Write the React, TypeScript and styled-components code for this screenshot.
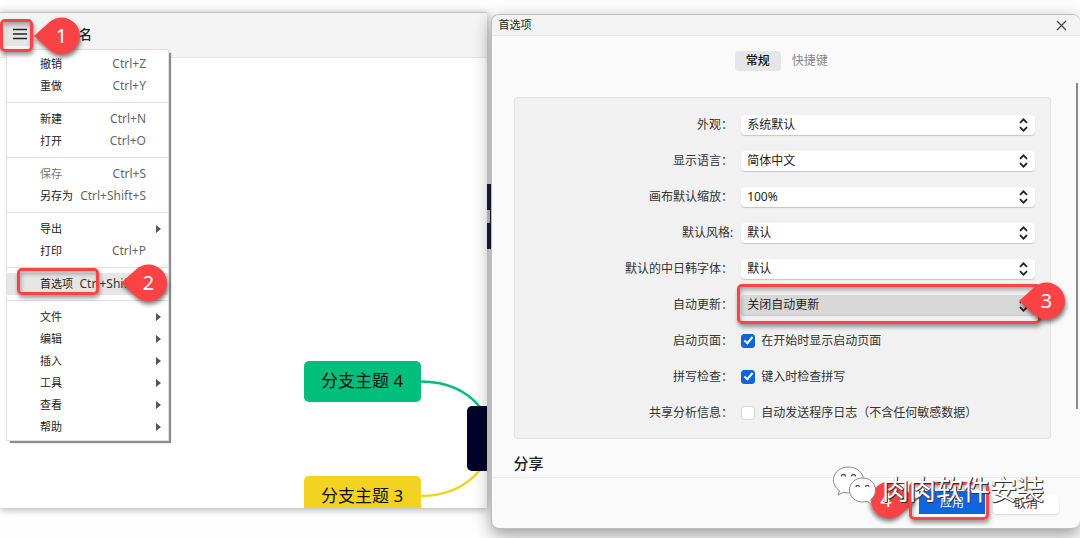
import React, { useState } from "react";
import styled, { createGlobalStyle, css } from "styled-components";

const RED = "#fb4346";

const GlobalStyle = createGlobalStyle`
  *, *::before, *::after { box-sizing: border-box; }
  body {
    margin: 0;
    background: #fefefe;
    color: #222;
    font-family: "Noto Sans", "Noto Sans CJK SC", sans-serif;
    font-size: 12px;
    line-height: 20px;
    overflow: hidden;
  }
  button, select, input { font: inherit; color: inherit; margin: 0; }
`;

const Desktop = styled.div`
  display: flex;
  align-items: flex-start;
  gap: 4px;
  min-height: 100vh;
  padding-top: 12px;
  overflow: hidden;
`;

/* ---------- Mind map window ---------- */

const MapWindow = styled.main`
  position: relative;
  flex: 487 1 0;
  min-width: 0;
  border-top: 1px solid #c4c4c4;
  box-shadow: 0 1px 8px rgba(0, 0, 0, 0.35);
`;

const MapHeader = styled.header`
  display: flex;
  align-items: center;
  gap: 45px;
  height: 45px;
  padding: 0 6px 2px;
  background: #f4f4f4;
  border-bottom: 1px solid #e6e6e6;
`;

const MenuButton = styled.button`
  display: grid;
  place-items: center end;
  width: 28px;
  height: 24px;
  padding: 0;
  border: 0;
  border-radius: 3px;
  background: #e6e6e6;
`;

const MapTitle = styled.h1`
  margin: 0;
  font-size: 13px;
  font-weight: 500;
`;

const Canvas = styled.section`
  position: relative;
  height: 450px;
  background: #fff;
  overflow: hidden;
`;

const Links = styled.svg`
  position: absolute;
  right: 0;
  bottom: 0;
`;

const Topic = styled.div<{ $color: string; $top: number }>`
  position: absolute;
  top: ${(p) => p.$top}px;
  right: 66px;
  width: 117px;
  height: 41px;
  border-radius: 5px;
  background: ${(p) => p.$color};
  color: #111;
  font-size: 17px;
  line-height: 40px;
  text-align: center;
`;

const CentralTopic = styled.div`
  position: absolute;
  top: 348px;
  right: 0;
  width: 20px;
  height: 65px;
  border-radius: 5px 0 0 5px;
  background: #000229;
`;

const EdgeTopic = styled.div`
  position: absolute;
  top: 171px;
  right: -4px;
  display: flex;
  align-items: center;
  width: 4px;
  height: 65px;
  background: #1c1b38;

  &::before {
    content: "";
    width: 3px;
    height: 13px;
    background: #c9c9d2;
  }
`;

const Menu = styled.nav`
  position: absolute;
  top: 36px;
  left: 6px;
  width: 163px;
  padding: 3px 0 2px;
  background: #fff;
  border: 1px solid #dfe1e6;
  box-shadow: 3px 3px 1px -1px #8d8d8d;
  font-size: 11px;
`;

const MenuGroup = styled.ul`
  margin: 0;
  padding: 0;
  list-style: none;

  & + & {
    margin-top: 5px;
    padding-top: 5px;
    border-top: 1px solid #dcdfe5;
  }
`;

const MenuItem = styled.button<{ $active?: boolean }>`
  display: flex;
  align-items: center;
  justify-content: space-between;
  width: 100%;
  height: 22px;
  padding: 0 22px 0 33px;
  border: 0;
  background: ${(p) => (p.$active ? "#e6e6e6" : "transparent")};
  color: #222;
  white-space: nowrap;

  &:disabled { color: #777; }
`;

const Shortcut = styled.span<{ $dark?: boolean }>`
  color: ${(p) => (p.$dark ? "#333" : "#666")};
  font-size: 12px;
`;

const SubmenuArrow = styled.span`
  margin-right: -15px;
  border: 4px solid transparent;
  border-left: 5px solid #555;
  border-right: 0;
`;

/* ---------- Preferences dialog ---------- */

const Dialog = styled.section`
  position: relative;
  flex: 589 1 0;
  min-width: 0;
  margin-top: 2px;
  border: 1px solid #bdbdbd;
  border-right: 0;
  border-radius: 8px;
  background: #fafafa;
  box-shadow: 0 6px 18px rgba(0, 0, 0, 0.4);
`;

const TitleBar = styled.header`
  display: flex;
  align-items: center;
  justify-content: space-between;
  height: 21px;
  padding: 0 13px 0 7px;
  border-bottom: 1px solid #e6e6e6;
  border-radius: 7px 7px 0 0;
  background: #f3f3f3;
  font-size: 11px;
`;

const CloseButton = styled.button`
  display: grid;
  place-items: center;
  padding: 0;
  border: 0;
  background: none;
`;

const Tabs = styled.div`
  display: flex;
  justify-content: center;
  padding: 15px 0 26px 2px;
`;

const Tab = styled.button<{ $selected: boolean }>`
  height: 20px;
  padding: 0 11px;
  border: 0;
  border-radius: 4px;
  line-height: 20px;
  background: ${(p) => (p.$selected ? "#e6e6e6" : "transparent")};
  color: ${(p) => (p.$selected ? "#111" : "#888")};
  font-weight: ${(p) => (p.$selected ? 500 : 400)};
`;

const Settings = styled.form`
  margin: 0 29px 0 22px;
  padding: 9px 15px 7px 0;
  border: 1px solid #e4e4e4;
  border-radius: 3px;
  background: #f1f1f1;
`;

const Field = styled.div`
  display: grid;
  grid-template-columns: 42% 1fr;
  align-items: center;
  gap: 8px;
  height: 36px;
`;

const fieldText = css`
  color: #333;
  white-space: nowrap;
`;

const FieldLabel = styled.label`
  ${fieldText}
  text-align: right;
`;

const SelectBox = styled.div`
  position: relative;
  display: flex;
  align-items: center;
`;

const Select = styled.select<{ $pressed?: boolean }>`
  width: 100%;
  height: 20px;
  padding: 0 24px 0 6px;
  border: 0;
  border-radius: 4px;
  appearance: none;
  background: ${(p) => (p.$pressed ? "#d8d8d8" : "#fff")};
  box-shadow: 0 1px 1px rgba(0, 0, 0, 0.18);
  line-height: 20px;
`;

const SelectArrows = styled.svg`
  position: absolute;
  right: 7px;
  pointer-events: none;
`;

const CheckLabel = styled.label`
  ${fieldText}
  display: flex;
  align-items: center;
  gap: 6px;
`;

const CheckBox = styled.input`
  width: 14px;
  height: 14px;
  border: 1px solid #d4d4d4;
  border-radius: 3px;
  appearance: none;
  background: #fff;

  &:checked {
    border-color: #0f66dc;
    background: #0f66dc;
  }

  &:checked::after {
    content: "";
    display: block;
    width: 5px;
    height: 9px;
    margin: 0 0 0 4px;
    border: solid #fff;
    border-width: 0 2px 2px 0;
    transform: rotate(40deg);
  }
`;

const SectionTitle = styled.h2`
  margin: 14px 22px 4px;
  color: #222;
  font-size: 15px;
  font-weight: 500;
  line-height: 20px;
`;

const Footer = styled.footer`
  display: flex;
  justify-content: flex-end;
  align-items: flex-end;
  gap: 8px;
  height: 51px;
  padding: 0 21px 14px;
  border-top: 1px solid #ececec;
`;

const ActionButton = styled.button<{ $primary?: boolean }>`
  width: 66px;
  height: ${(p) => (p.$primary ? 23 : 20)}px;
  padding: 0;
  border: 0;
  border-radius: ${(p) => (p.$primary ? 0 : 4)}px;
  background: ${(p) => (p.$primary ? "#0f66dc" : "#fff")};
  box-shadow: ${(p) => (p.$primary ? "none" : "0 1px 2px rgba(0, 0, 0, 0.15)")};
  color: ${(p) => (p.$primary ? "#fff" : "#333")};
`;

const ScrollThumb = styled.div`
  position: absolute;
  top: 68px;
  right: 2px;
  width: 2px;
  height: 326px;
  background: #8a8a8a;
`;

/* ---------- Tutorial annotations ---------- */

type Spot = { $x: number; $y: number };
type Box = Spot & { $w: number; $h: number };

const Highlight = styled.div<Box>`
  position: absolute;
  top: ${(p) => p.$y}px;
  left: ${(p) => p.$x}px;
  width: ${(p) => p.$w}px;
  height: ${(p) => p.$h}px;
  border: 3px solid ${RED};
  border-radius: 5px;
  box-shadow: 1px 3px 4px rgba(0, 0, 0, 0.4), inset 1px 3px 4px rgba(0, 0, 0, 0.3);
  pointer-events: none;
`;

/* Anchored to the right edge, so it stays over the settings controls. */
const ControlHighlight = styled(Highlight)`
  left: auto;
  right: ${(p) => p.$x}px;
`;

const Pin = styled.div<Spot & { $fromRight?: boolean; $flip?: boolean }>`
  position: absolute;
  top: ${(p) => p.$y}px;
  ${(p) => (p.$fromRight ? "right" : "left")}: ${(p) => p.$x}px;
  display: grid;
  width: 46px;
  height: 38px;
  color: #fff;
  font-size: 20px;
  line-height: 38px;
  pointer-events: none;

  > * { grid-area: 1 / 1; }

  > svg {
    overflow: visible;
    filter: drop-shadow(1px 3px 2px rgba(0, 0, 0, 0.5));
    transform: ${(p) => (p.$flip ? "scaleX(-1)" : "none")};
  }

  > span {
    position: relative;
    padding: ${(p) => (p.$flip ? "0 16px 0 0" : "0 0 0 9px")};
    text-align: center;
  }
`;

const Watermark = styled.div`
  position: absolute;
  right: 36px;
  bottom: 18px;
  display: flex;
  align-items: flex-start;
  gap: 6px;
  color: #fff;
  font-size: 27px;
  line-height: 40px;
  white-space: nowrap;
  text-shadow: 1px 1px 0 #333, 1px 0 0 #555, 0 1px 0 #555;
  pointer-events: none;

  > svg { margin-top: -4px; }
`;

type PinProps = { n: number; x: number; y: number; fromRight?: boolean; flip?: boolean };

function NumberPin({ n, x, y, fromRight, flip }: PinProps) {
  return (
    <Pin $x={x} $y={y} $fromRight={fromRight} $flip={flip}>
      <svg width="46" height="38" viewBox="0 0 46 38" aria-hidden="true">
        <path d="M0 19 L15 5.5 C19 2 23 .5 27.500 .5 A18.500 18.500 0 0 1 27.500 37.500 C23 37.500 19 36 15 32.500Z" fill={RED} />
      </svg>
      <span>{n}</span>
    </Pin>
  );
}

function WeChatLogo() {
  return (
    <svg width="43" height="39" viewBox="0 0 43 39" aria-hidden="true">
      <g fill="#fff" stroke="#888" strokeWidth="1">
        <path d="M15.500 1C7 1 .5 6.500.5 14c0 4.500 2.300 8.200 6 10.600L5 29l5.500-2.800c1.700.5 3.300.7 5 .7C24 26.900 30.500 21 30.500 14S24 1 15.500 1Z" />
        <path d="M29.500 12C22.200 12 16.500 17.200 16.500 24S22.200 36 29.500 36c1.600 0 3-.2 4.500-.7l5 2.700-1.300-4.300c3-2.200 4.800-5.700 4.800-9.700 0-6.800-5.700-12-13-12Z" />
      </g>
      <g fill="none" stroke="#555" strokeWidth="1.300">
        <path d="M8.500 10.500a2 2 0 0 1 4 0M18.500 10.500a2 2 0 0 1 4 0M23 21a1.700 1.700 0 0 1 3.400 0M32.500 21a1.700 1.700 0 0 1 3.400 0" />
      </g>
    </svg>
  );
}

type Entry = { label: string; keys?: string; disabled?: boolean; active?: boolean };

const MENU: Entry[][] = [
  [{ label: "撤销", keys: "Ctrl+Z" }, { label: "重做", keys: "Ctrl+Y" }],
  [{ label: "新建", keys: "Ctrl+N" }, { label: "打开", keys: "Ctrl+O" }],
  [{ label: "保存", keys: "Ctrl+S", disabled: true }, { label: "另存为", keys: "Ctrl+Shift+S" }],
  [{ label: "导出" }, { label: "打印", keys: "Ctrl+P" }],
  [{ label: "首选项", keys: "Ctrl+Shift+P", active: true }],
  [{ label: "文件" }, { label: "编辑" }, { label: "插入" }, { label: "工具" }, { label: "查看" }, { label: "帮助" }],
];

const SELECTS = [
  { id: "look", label: "外观：", value: "系统默认" },
  { id: "lang", label: "显示语言：", value: "简体中文" },
  { id: "zoom", label: "画布默认缩放：", value: "100%" },
  { id: "style", label: "默认风格:", value: "默认" },
  { id: "cjk", label: "默认的中日韩字体：", value: "默认" },
  { id: "update", label: "自动更新：", value: "关闭自动更新", pressed: true },
];

const CHECKS = [
  { id: "start", label: "启动页面：", text: "在开始时显示启动页面", on: true },
  { id: "spell", label: "拼写检查：", text: "键入时检查拼写", on: true },
  { id: "logs", label: "共享分析信息：", text: "自动发送程序日志（不含任何敏感数据）", on: false },
];

export default function App() {
  const [tab, setTab] = useState("常规");

  return (
    <>
      <GlobalStyle />
      <Desktop>
        <MapWindow>
          <MapHeader>
            <MenuButton aria-label="菜单">
              <svg width="21" height="14" viewBox="0 0 21 14" stroke="#222" strokeWidth="1.500" aria-hidden="true">
                <path d="M0 2.500h14M0 7h14M0 11.500h14" />
              </svg>
            </MenuButton>
            <MapTitle>名</MapTitle>
          </MapHeader>
          <Canvas>
            <Links width="70" height="150" viewBox="0 0 70 150" fill="none" strokeWidth="2.500" aria-hidden="true">
              <path d="M3 23.500C30 23.500 49 32 63 49" stroke="#00bf7d" />
              <path d="M3 138C30 138 49 129 63 112" stroke="#f3d321" />
            </Links>
            <Topic $color="#00bf7d" $top={303}>分支主题 4</Topic>
            <Topic $color="#f3d321" $top={418}>分支主题 3</Topic>
            <CentralTopic />
          </Canvas>
          <EdgeTopic />
          <Menu>
            {MENU.map((group, i) => (
              <MenuGroup key={i}>
                {group.map((item) => (
                  <li key={item.label}>
                    <MenuItem disabled={item.disabled} $active={item.active}>
                      {item.label}
                      {item.keys ? <Shortcut $dark={item.active}>{item.keys}</Shortcut> : <SubmenuArrow />}
                    </MenuItem>
                  </li>
                ))}
              </MenuGroup>
            ))}
          </Menu>
          <Highlight $x={0} $y={6} $w={33} $h={33} />
          <NumberPin n={1} x={34} y={4} />
          <Highlight $x={17} $y={255} $w={82} $h={27} />
          <NumberPin n={2} x={121} y={251} />
        </MapWindow>

        <Dialog role="dialog" aria-label="首选项">
          <TitleBar>
            首选项
            <CloseButton aria-label="关闭">
              <svg width="11" height="11" viewBox="0 0 11 11" stroke="#444" strokeWidth="1.200" aria-hidden="true">
                <path d="M1 1l9 9M10 1l-9 9" />
              </svg>
            </CloseButton>
          </TitleBar>
          <Tabs role="tablist">
            {["常规", "快捷键"].map((name) => (
              <Tab key={name} role="tab" aria-selected={tab === name} $selected={tab === name} onClick={() => setTab(name)}>
                {name}
              </Tab>
            ))}
          </Tabs>
          <Settings>
            {SELECTS.map((s) => (
              <Field key={s.id}>
                <FieldLabel htmlFor={s.id}>{s.label}</FieldLabel>
                <SelectBox>
                  <Select id={s.id} $pressed={s.pressed}>
                    <option>{s.value}</option>
                  </Select>
                  <SelectArrows width="9" height="14" viewBox="0 0 9 14" fill="none" stroke="#222" strokeWidth="1.800" aria-hidden="true">
                    <path d="M1 4.800l3.500-3.500 3.500 3.500M1 9.200l3.500 3.500 3.500-3.500" />
                  </SelectArrows>
                </SelectBox>
              </Field>
            ))}
            {CHECKS.map((c) => (
              <Field key={c.id}>
                <FieldLabel htmlFor={c.id}>{c.label}</FieldLabel>
                <CheckLabel>
                  <CheckBox id={c.id} type="checkbox" defaultChecked={c.on} />
                  {c.text}
                </CheckLabel>
              </Field>
            ))}
          </Settings>
          <SectionTitle>分享</SectionTitle>
          <Footer>
            <ActionButton $primary>应用</ActionButton>
            <ActionButton>取消</ActionButton>
          </Footer>
          <ScrollThumb />
          <ControlHighlight $x={39} $y={269} $w={304} $h={40} />
          <NumberPin n={3} x={15} y={267} fromRight />
          <NumberPin n={4} x={163} y={466} fromRight flip />
          <ControlHighlight $x={91} $y={467} $w={80} $h={38} />
          <Watermark>
            <WeChatLogo />
            肉肉软件安装
          </Watermark>
        </Dialog>
      </Desktop>
    </>
  );
}
